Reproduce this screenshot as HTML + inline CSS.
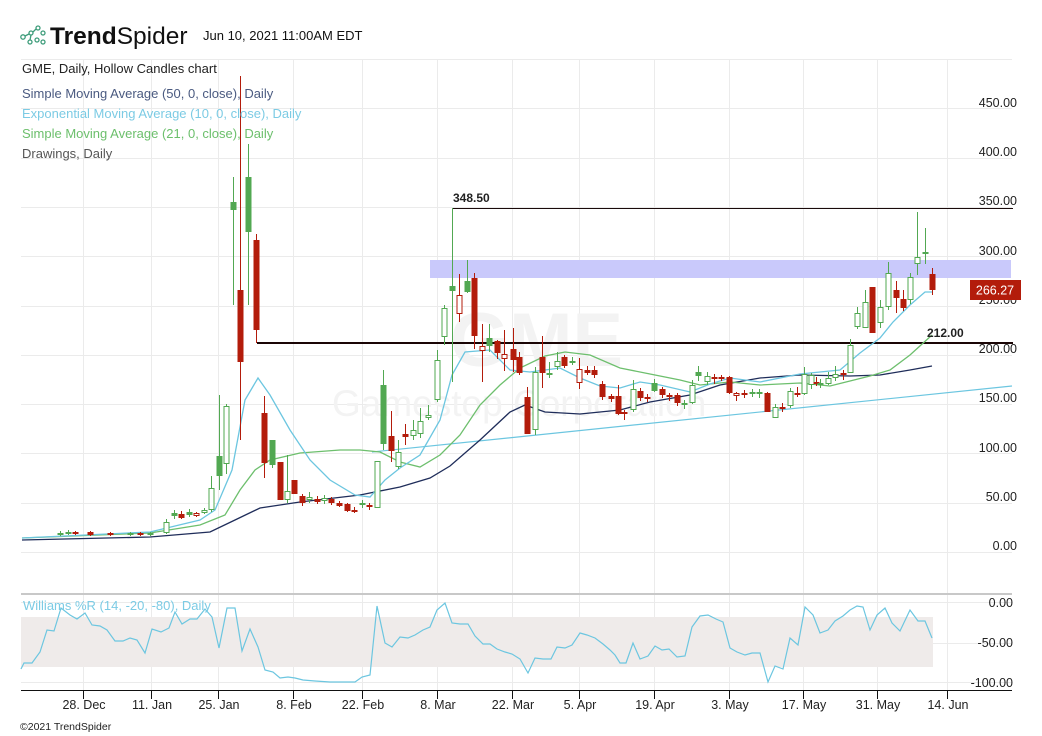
<!DOCTYPE html>
<html><head><meta charset="utf-8"><style>
html,body{margin:0;padding:0;background:#fff;}
body{width:1042px;height:736px;overflow:hidden;position:relative;font-family:"Liberation Sans",sans-serif;}
svg{position:absolute;left:0;top:0;}
</style></head><body>
<svg id="s" width="1042" height="736" xmlns="http://www.w3.org/2000/svg" font-family="Liberation Sans, sans-serif">
<g id="grid" stroke="#ebebeb" stroke-width="1"></g>
<text x="450" y="366" font-size="76" font-weight="bold" fill="#f3f3f3">GME</text>
<text x="332" y="416" font-size="37" fill="#f3f3f3">Gamestop Corporation</text>
<rect x="430" y="260" width="581" height="18" fill="#c9c9fb"/>
<line x1="452" y1="208.5" x2="1013" y2="208.5" stroke="#1a0a0a" stroke-width="1"/>
<line x1="257" y1="343" x2="1013" y2="343" stroke="#1a0505" stroke-width="2"/>
<line x1="372" y1="452" x2="1012" y2="386" stroke="#6cc6e0" stroke-width="1.2"/>
<g id="ma" fill="none" stroke-width="1.3"></g>
<g id="candles"></g>
<text x="453" y="202" font-size="12" font-weight="bold" fill="#222">348.50</text>
<text x="927" y="337" font-size="12" font-weight="bold" fill="#222">212.00</text>
<g font-size="12.5" fill="#222" text-anchor="end">
<text x="1017" y="107">450.00</text><text x="1017" y="156">400.00</text><text x="1017" y="205">350.00</text>
<text x="1017" y="255">300.00</text><text x="1017" y="304">250.00</text><text x="1017" y="353">200.00</text>
<text x="1017" y="402">150.00</text><text x="1017" y="452">100.00</text><text x="1017" y="501">50.00</text>
<text x="1017" y="550">0.00</text>
<text x="1013" y="607">0.00</text><text x="1013" y="647">-50.00</text><text x="1013" y="687">-100.00</text>
</g>
<rect x="970" y="280" width="51" height="20" fill="#b31c0b"/>
<text x="995" y="294.5" font-size="12.5" fill="#fff" text-anchor="middle">266.27</text>
<line x1="21" y1="594" x2="1012" y2="594" stroke="#c8c8c8" stroke-width="2"/>
<rect x="21" y="617" width="912" height="50" fill="#efebea"/>
<polyline id="wr" fill="none" stroke="#6cc6e0" stroke-width="1.2"/>
<line x1="21" y1="690.5" x2="1012" y2="690.5" stroke="#111" stroke-width="1"/>
<g id="ticks" stroke="#111"></g>
<g id="dates" font-size="12.5" fill="#222" text-anchor="middle"></g>
<g font-size="13">
<text x="22" y="73" fill="#222">GME, Daily, Hollow Candles chart</text>
<text x="22" y="98" fill="#4a5a80">Simple Moving Average (50, 0, close), Daily</text>
<text x="22" y="118" fill="#7ccbe4">Exponential Moving Average (10, 0, close), Daily</text>
<text x="22" y="138" fill="#6cbf6c">Simple Moving Average (21, 0, close), Daily</text>
<text x="22" y="158" fill="#555">Drawings, Daily</text>
<text x="23" y="610" fill="#7ccbe4">Williams %R (14, -20, -80), Daily</text>
</g>
<text x="20" y="730" font-size="10.5" fill="#222">©2021 TrendSpider</text>
<g fill="none" stroke="#3d9c7a" stroke-width="1.3">
<circle cx="23" cy="37" r="2.2"/><circle cx="31" cy="33" r="2"/><circle cx="38" cy="28" r="2"/><circle cx="43" cy="33" r="2"/>
<circle cx="30" cy="42" r="2"/><circle cx="37" cy="40" r="2"/><circle cx="43" cy="42" r="2"/>
<path d="M25 36 L29 34 M31 35 L30 40 M33 32 L36 29"/>
</g>
<text x="50" y="44" font-size="24.5" fill="#111"><tspan font-weight="bold">Trend</tspan><tspan>Spider</tspan></text>
<text x="203" y="40" font-size="13" fill="#111">Jun 10, 2021 11:00AM EDT</text>
</svg>
<script>
var NS="http://www.w3.org/2000/svg";
function el(p,t,a){var e=document.createElementNS(NS,t);for(var k in a)e.setAttribute(k,a[k]);p.appendChild(e);return e;}
var g=document.getElementById('grid');
var vx=[83,151,218,293,362,437,512,579,654,729,803,877,947];
vx.forEach(function(x){el(g,'line',{x1:x+.5,y1:59,x2:x+.5,y2:690});});
for(var i=0;i<11;i++){var y=59+i*49.3;el(g,'line',{x1:21,y1:Math.round(y)+.5,x2:1012,y2:Math.round(y)+.5});}
[602,643,682].forEach(function(y){el(g,'line',{x1:21,y1:y+.5,x2:1012,y2:y+.5});});
var tk=document.getElementById('ticks'),dt=document.getElementById('dates');
var dl=["28. Dec","11. Jan","25. Jan","8. Feb","22. Feb","8. Mar","22. Mar","5. Apr","19. Apr","3. May","17. May","31. May","14. Jun"];
vx.forEach(function(x,i){el(tk,'line',{x1:x+.5,y1:690,x2:x+.5,y2:699});var t=el(dt,'text',{x:x+1,y:709});t.textContent=dl[i];});
function pl(pts,c){el(document.getElementById('ma'),'polyline',{points:pts.map(function(p){return p.join(',')}).join(' '),stroke:c});}
pl([[22,540],[150,537],[210,532],[235,520],[260,508],[300,502],[360,495],[400,487],[430,478],[450,466],[480,440],[510,412],[525,405],[545,412],[580,414],[620,410],[650,402],[690,395],[720,385],[760,378],[800,375],[850,376],[880,375],[910,370],[932,366]],'#1f2d5a');
pl([[22,538],[150,533],[200,525],[225,515],[240,490],[255,470],[270,460],[300,453],[340,450],[360,450],[380,452],[400,462],[420,467],[440,455],[460,435],[480,405],[500,385],[520,368],[545,356],[565,352],[590,355],[620,368],[650,374],[680,380],[700,385],[730,382],[760,385],[800,383],[830,386],[850,381],[870,376],[890,370],[910,355],[932,335]],'#6dbf6d');
pl([[22,538],[150,532],[200,520],[215,510],[232,470],[245,400],[258,378],[270,395],[290,430],[310,460],[330,480],[355,495],[370,497],[385,480],[400,468],[420,455],[440,420],[452,375],[465,352],[490,350],[510,370],[530,372],[560,368],[580,378],[600,386],[620,388],[640,382],[660,385],[690,392],[710,384],[730,378],[760,382],[780,378],[800,374],[820,372],[840,370],[860,353],[880,338],[893,322],[910,305],[925,292],[932,292]],'#6cc6e0');
var C=[
[60,533,535,531,536,'g',0],[68,532,534,530,535,'g',1],[75,532,534,531,535,'r',1],[90,532,535,531,536,'r',1],[110,533,535,532,536,'r',1],[130,533,535,532,536,'g',1],[140,533,535,532,536,'r',1],[150,533,535,532,536,'g',0],
[166,522,533,519,534,'g',0],[174,513,516,510,519,'g',1],[181,514,518,511,519,'r',1],[189,512,515,509,517,'g',1],[196,513,516,512,517,'r',0],[204,510,513,508,514,'g',0],
[211,488,510,476,512,'g',0],[219,456,476,395,490,'g',1],[226,406,464,404,474,'g',0],[233,202,210,177,305,'g',1],[240,290,362,76,440,'r',1],[248,177,232,144,305,'g',1],[256,240,330,234,343,'r',1],
[264,413,463,396,478,'r',1],[272,440,465,440,468,'g',1],[280,462,500,462,500,'r',1],[287,491,500,455,503,'g',0],[294,480,494,480,494,'r',1],[302,496,503,494,506,'r',1],[309,497,500,492,503,'g',0],[317,499,502,496,504,'r',1],[324,498,501,495,504,'g',0],[331,499,503,497,505,'r',1],[339,503,506,501,507,'r',1],[347,504,511,503,512,'r',1],[354,510,512,507,513,'r',1],[362,503,505,500,508,'g',1],[369,505,507,503,510,'r',1],
[377,461,508,461,508,'g',0],[383,385,444,370,450,'g',1],[391,436,451,411,462,'r',1],[398,452,467,440,469,'g',0],[405,434,437,424,445,'r',1],[413,430,436,420,440,'g',0],[420,421,434,408,438,'g',0],[428,415,418,405,420,'g',0],
[437,360,400,350,402,'g',0],[444,308,337,305,345,'g',0],[452,286,291,208,382,'g',1],[459,295,314,274,322,'r',0],[467,281,292,260,293,'g',1],[474,278,336,273,349,'r',1],
[482,346,351,324,382,'r',0],[489,338,346,324,352,'g',1],[497,341,353,340,359,'r',1],[504,354,359,330,371,'r',0],[513,349,360,328,372,'r',1],[519,357,373,352,375,'r',1],[527,397,434,387,434,'r',1],[535,372,430,367,435,'g',0],[542,357,373,336,388,'r',1],[549,373,375,362,378,'g',1],[557,361,367,352,370,'g',0],[564,357,366,355,368,'r',1],[572,361,363,357,365,'g',1],[579,369,383,358,389,'r',0],
[587,370,373,366,375,'r',1],[594,370,375,366,378,'r',1],[602,384,397,381,400,'r',1],[611,396,399,394,402,'r',1],[618,396,414,385,415,'r',1],[624,412,414,410,420,'r',0],[633,389,410,380,412,'g',0],[640,391,398,388,401,'r',1],[647,397,399,394,402,'r',1],[654,383,391,379,392,'g',1],[662,389,395,387,398,'r',1],[669,395,397,393,401,'r',1],[677,395,403,393,406,'r',1],[684,403,405,400,409,'g',0],[692,385,403,380,404,'g',0],[698,372,376,366,381,'g',1],[707,376,382,372,385,'g',0],[714,377,379,374,384,'r',1],[721,377,379,375,381,'r',1],[729,377,393,376,394,'r',1],[736,393,396,392,401,'r',0],[744,393,395,390,398,'r',1],[752,392,394,389,397,'g',1],[759,392,394,389,398,'g',1],
[767,393,412,392,412,'r',1],[775,407,418,404,418,'g',0],[782,407,409,403,412,'r',1],[790,391,406,388,408,'g',0],[797,393,395,387,397,'r',1],[804,374,394,367,395,'g',0],[811,375,385,373,389,'g',0],[816,382,384,377,386,'r',1],[820,383,385,379,388,'g',1],[828,378,384,372,385,'g',0],[835,374,378,366,381,'g',0],
[843,373,375,370,380,'r',1],[850,345,373,339,373,'g',0],[857,313,327,307,329,'g',0],[865,302,328,290,328,'g',0],[872,287,333,287,333,'r',1],[880,307,323,300,328,'g',0],[888,273,307,262,310,'g',0],[896,290,298,281,313,'r',1],[903,299,308,290,311,'r',1],[910,277,300,273,304,'g',0],[917,257,264,212,275,'g',0],[925,252,254,228,264,'g',1],[932,274,290,268,295,'r',1]
];
var cg=document.getElementById('candles');
C.forEach(function(c){var col=c[5]=='g'?'#52a852':'#b31c0b';var x=c[0];
el(cg,'line',{x1:x+.5,y1:c[3],x2:x+.5,y2:c[4],stroke:col,'stroke-width':1});
var h=Math.max(c[2]-c[1],1.5);
if(c[6])el(cg,'rect',{x:x-2.5,y:c[1],width:6,height:h,fill:col});
else el(cg,'rect',{x:x-2,y:c[1]+.5,width:5,height:Math.max(h-1,1),fill:'#fff',stroke:col,'stroke-width':1});
});
var W=[[21,669],[24,663],[32,663],[40,652],[47,630],[54,631],[61,608],[70,615],[77,619],[85,613],[92,625],[100,626],[107,630],[115,641],[123,641],[130,638],[137,640],[145,653],[152,629],[161,632],[169,628],[175,612],[182,624],[190,619],[197,619],[205,609],[212,617],[219,648],[227,608],[235,608],[242,651],[250,629],[258,647],[265,670],[273,672],[280,678],[288,677],[295,678],[303,680],[315,681],[330,682],[345,682],[355,682],[362,677],[370,675],[377,606],[385,643],[392,647],[400,637],[408,638],[415,635],[423,630],[430,627],[437,610],[445,603],[452,623],[460,624],[468,624],[475,636],[483,644],[490,644],[497,649],[505,652],[512,654],[520,659],[528,673],[535,658],[543,659],[551,659],[557,647],[565,648],[572,645],[580,633],[587,635],[595,638],[603,644],[610,650],[615,655],[620,663],[626,663],[633,643],[640,659],[648,656],[655,646],[662,650],[669,649],[677,657],[685,656],[692,627],[700,616],[708,615],[716,619],[723,622],[730,648],[737,652],[745,655],[752,653],[760,653],[768,682],[775,666],[783,669],[790,638],[798,645],[805,607],[813,615],[820,633],[828,630],[835,621],[843,616],[850,610],[857,606],[863,607],[870,630],[877,615],[885,608],[892,623],[900,631],[910,610],[918,621],[925,621],[932,638]];
document.getElementById('wr').setAttribute('points',W.map(function(p){return p.join(',')}).join(' '));
</script>
</body></html>
